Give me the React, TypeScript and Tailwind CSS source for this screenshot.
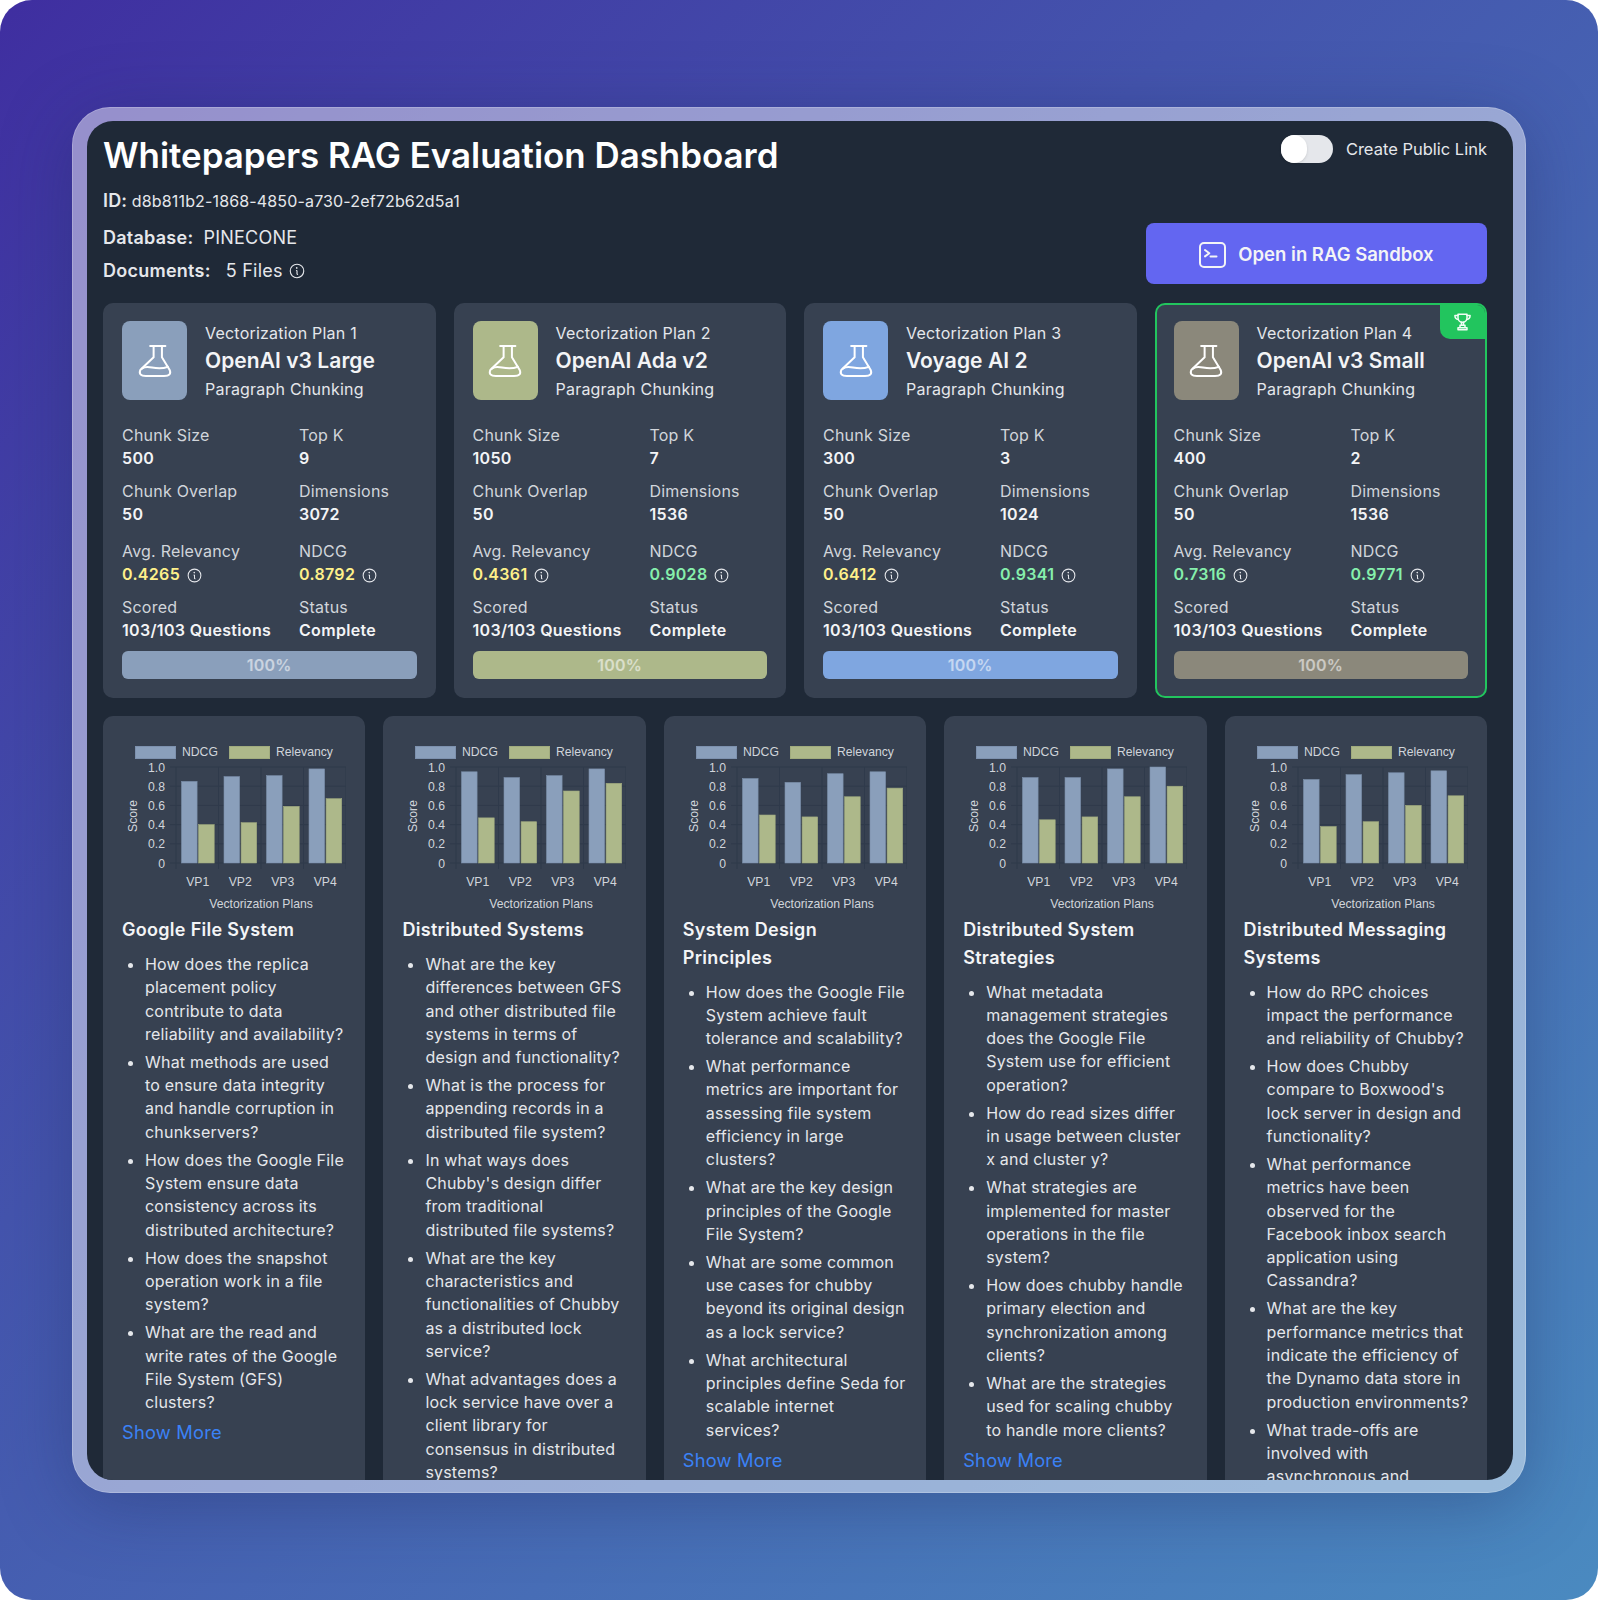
import { PiInfo } from "react-icons/pi";

const plans = [
  {
    label: "Vectorization Plan 1",
    name: "OpenAI v3 Large",
    color: "bg-[#8a9fbb]",
    chunkSize: "500",
    topK: "9",
    dimensions: "3072",
    relevancy: "0.4265",
    relevancyColor: "text-[#fef08a]",
    ndcg: "0.8792",
    ndcgColor: "text-[#fef08a]",
  },
  {
    label: "Vectorization Plan 2",
    name: "OpenAI Ada v2",
    color: "bg-[#adb88a]",
    chunkSize: "1050",
    topK: "7",
    dimensions: "1536",
    relevancy: "0.4361",
    relevancyColor: "text-[#fef08a]",
    ndcg: "0.9028",
    ndcgColor: "text-[#86efac]",
  },
  {
    label: "Vectorization Plan 3",
    name: "Voyage AI 2",
    color: "bg-[#7fa6e0]",
    chunkSize: "300",
    topK: "3",
    dimensions: "1024",
    relevancy: "0.6412",
    relevancyColor: "text-[#fef08a]",
    ndcg: "0.9341",
    ndcgColor: "text-[#86efac]",
  },
  {
    label: "Vectorization Plan 4",
    name: "OpenAI v3 Small",
    color: "bg-[#8b887b]",
    chunkSize: "400",
    topK: "2",
    dimensions: "1536",
    relevancy: "0.7316",
    relevancyColor: "text-[#86efac]",
    ndcg: "0.9771",
    ndcgColor: "text-[#86efac]",
    winner: true,
  },
];

const topics = [
  {
    title: "Google File System",
    ndcg: [0.85, 0.9, 0.91, 0.98],
    relevancy: [0.4, 0.42, 0.59, 0.67],
    showMore: true,
    questions: [
      "How does the replica placement policy contribute to data reliability and availability?",
      "What methods are used to ensure data integrity and handle corruption in chunkservers?",
      "How does the Google File System ensure data consistency across its distributed architecture?",
      "How does the snapshot operation work in a file system?",
      "What are the read and write rates of the Google File System (GFS) clusters?",
    ],
  },
  {
    title: "Distributed Systems",
    ndcg: [0.95, 0.89, 0.91, 0.98],
    relevancy: [0.47, 0.43, 0.75, 0.83],
    showMore: false,
    questions: [
      "What are the key differences between GFS and other distributed file systems in terms of design and functionality?",
      "What is the process for appending records in a distributed file system?",
      "In what ways does Chubby's design differ from traditional distributed file systems?",
      "What are the key characteristics and functionalities of Chubby as a distributed lock service?",
      "What advantages does a lock service have over a client library for consensus in distributed systems?",
    ],
  },
  {
    title: "System Design Principles",
    ndcg: [0.88, 0.84, 0.93, 0.95],
    relevancy: [0.5, 0.48, 0.69, 0.78],
    showMore: true,
    questions: [
      "How does the Google File System achieve fault tolerance and scalability?",
      "What performance metrics are important for assessing file system efficiency in large clusters?",
      "What are the key design principles of the Google File System?",
      "What are some common use cases for chubby beyond its original design as a lock service?",
      "What architectural principles define Seda for scalable internet services?",
    ],
  },
  {
    title: "Distributed System Strategies",
    ndcg: [0.89, 0.89, 0.98, 1.0],
    relevancy: [0.45, 0.48, 0.69, 0.8],
    showMore: true,
    questions: [
      "What metadata management strategies does the Google File System use for efficient operation?",
      "How do read sizes differ in usage between cluster x and cluster y?",
      "What strategies are implemented for master operations in the file system?",
      "How does chubby handle primary election and synchronization among clients?",
      "What are the strategies used for scaling chubby to handle more clients?",
    ],
  },
  {
    title: "Distributed Messaging Systems",
    ndcg: [0.87, 0.92, 0.94, 0.96],
    relevancy: [0.38, 0.43, 0.6, 0.7],
    showMore: false,
    questions: [
      "How do RPC choices impact the performance and reliability of Chubby?",
      "How does Chubby compare to Boxwood's lock server in design and functionality?",
      "What performance metrics have been observed for the Facebook inbox search application using Cassandra?",
      "What are the key performance metrics that indicate the efficiency of the Dynamo data store in production environments?",
      "What trade-offs are involved with asynchronous and synchronous replication?",
    ],
  },
];

function FlaskIcon() {
  return (
    <svg width="36" height="34" viewBox="28 56 104 98" fill="none" stroke="white" strokeWidth="5.8" strokeLinecap="round" strokeLinejoin="round">
      <path d="M66 62H110M76 62V94L38 130Q30 148 54 148H106Q130 148 122 130L100 94V62" />
      <path d="M43 127C60 112 80 136 117 122" />
    </svg>
  );
}

function TerminalIcon() {
  return (
    <svg width="27" height="26" viewBox="0 0 27 26" fill="none" stroke="currentColor" strokeWidth="2" strokeLinecap="round" strokeLinejoin="round">
      <rect x="1" y="1" width="25" height="24" rx="4" />
      <path d="M6 8l4.3 3.2L6 14.4M11.5 14.4h6" />
    </svg>
  );
}

function TrophyIcon() {
  return (
    <svg width="17" height="18" viewBox="0 0 17 18" fill="none" stroke="currentColor" strokeWidth="1.5" strokeLinejoin="round" strokeLinecap="round">
      <path d="M4 1.2h9v3.6a4.5 4.5 0 0 1-9 0z" />
      <path d="M4 2.6H.9c0 2.4 1.1 3.7 3.5 4M13 2.6h3.1c0 2.4-1.1 3.7-3.5 4" />
      <path d="M7.5 9.3v3M9.5 9.3v3M6 12.3h5v2.4H6zM4 16.8h9v-2.1H4z" />
    </svg>
  );
}

function Stat({ label, value }: { label: string; value: string }) {
  return (
    <div>
      <div className="text-[#d1d5db]">{label}</div>
      <div className="font-semibold tracking-[0.32px] text-[#f3f4f6]">{value}</div>
    </div>
  );
}

function ScoreStat({ label, value, color }: { label: string; value: string; color: string }) {
  return (
    <div>
      <div className="text-[#d1d5db]">{label}</div>
      <div className="flex items-center gap-[6px]">
        <span className={`font-semibold tracking-[0.32px] ${color}`}>{value}</span>
        <PiInfo className="text-[#e5e7eb]" size={17} />
      </div>
    </div>
  );
}

function PlanCard({ plan }: { plan: (typeof plans)[number] }) {
  return (
    <div
      className={`relative h-[395px] overflow-hidden rounded-[10px] border-2 bg-[#374151] px-[17px] pt-4 text-[16px] leading-[23.3px] tracking-[0.22px] ${
        plan.winner ? "border-[#22c55e]" : "border-transparent"
      }`}
    >
      {plan.winner && (
        <div className="absolute right-0 top-0 flex h-[34px] w-[45px] items-center justify-center rounded-bl-[10px] bg-[#22c55e] text-[#f0fdf4]">
          <TrophyIcon />
        </div>
      )}
      <div className="flex h-[79px] items-center gap-[18px]">
        <div className={`flex h-[79px] w-[65px] shrink-0 items-center justify-center rounded-lg ${plan.color}`}>
          <FlaskIcon />
        </div>
        <div className="flex flex-col gap-[4.5px] pt-[2px] text-[#e5e7eb]">
          <div>{plan.label}</div>
          <div className="-mt-px mb-px text-[21px] font-semibold leading-[24px] tracking-[0.05px] text-[#f3f4f6]">{plan.name}</div>
          <div>Paragraph Chunking</div>
        </div>
      </div>
      <div className="mt-[24px] grid grid-cols-[177px_1fr] gap-y-[9.5px]">
        <Stat label="Chunk Size" value={plan.chunkSize} />
        <Stat label="Top K" value={plan.topK} />
        <Stat label="Chunk Overlap" value="50" />
        <Stat label="Dimensions" value={plan.dimensions} />
      </div>
      <div className="mt-[13.5px] grid grid-cols-[177px_1fr] gap-y-[9px]">
        <ScoreStat label="Avg. Relevancy" value={plan.relevancy} color={plan.relevancyColor} />
        <ScoreStat label="NDCG" value={plan.ndcg} color={plan.ndcgColor} />
        <Stat label="Scored" value="103/103 Questions" />
        <Stat label="Status" value="Complete" />
      </div>
      <div className={`mt-[9px] flex h-[28px] items-center justify-center rounded-md font-semibold text-white/55 ${plan.color}`}>
        100%
      </div>
    </div>
  );
}

function ScoreChart({ ndcg, relevancy }: { ndcg: number[]; relevancy: number[] }) {
  const left = 54;
  const bottom = 128;
  const plotHeight = 96;
  const slot = 42.5;
  const ticks = [0, 0.2, 0.4, 0.6, 0.8, 1];

  return (
    <svg width="224" height="181" viewBox="0 0 224 181" className="block" fontFamily="'Liberation Sans', Arial, sans-serif" fontSize="12.2" fill="#d1d5db" letterSpacing="0">
      <rect x="13.5" y="11.5" width="40" height="12" fill="#8a9fbb" stroke="#7d91ae" />
      <text x="60" y="21">NDCG</text>
      <rect x="107.5" y="11.5" width="40" height="12" fill="#adb88a" stroke="#a0ab7e" />
      <text x="154" y="21">Relevancy</text>

      {ticks.map((t) => {
        const y = bottom - t * plotHeight;
        return (
          <g key={t}>
            <line x1={left - 6} x2="224" y1={y} y2={y} stroke="#2f3a4b" />
            <text x={left - 11} y={y + 4.5} textAnchor="end">
              {t === 0 ? "0" : t.toFixed(1)}
            </text>
          </g>
        );
      })}
      {[0, 1, 2, 3, 4].map((i) => (
        <line key={i} x1={left + i * slot} x2={left + i * slot} y1="32" y2={bottom + 6} stroke="#2f3a4b" />
      ))}

      {ndcg.map((v, i) => (
        <rect key={i} x={left + i * slot + 5.5} y={bottom - v * plotHeight} width="15.6" height={v * plotHeight} fill="#8a9fbb" stroke="#7a8ea9" strokeWidth="0.6" />
      ))}
      {relevancy.map((v, i) => (
        <rect key={i} x={left + i * slot + 22.6} y={bottom - v * plotHeight} width="15.6" height={v * plotHeight} fill="#adb88a" stroke="#9fa97f" strokeWidth="0.6" />
      ))}

      {["VP1", "VP2", "VP3", "VP4"].map((name, i) => (
        <text key={name} x={left + i * slot + slot / 2 + 0.5} y="150.5" textAnchor="middle">
          {name}
        </text>
      ))}
      <text x="139" y="173" textAnchor="middle">
        Vectorization Plans
      </text>
      <text transform="translate(15 81) rotate(-90)" textAnchor="middle">
        Score
      </text>
    </svg>
  );
}

function TopicCard({ topic }: { topic: (typeof topics)[number] }) {
  return (
    <div className="min-h-[900px] rounded-[10px] bg-[#374151] px-[19px] pt-[19px] text-[16px] leading-[23.3px] tracking-[0.2px] text-[#e5e7eb]">
      <ScoreChart ndcg={topic.ndcg} relevancy={topic.relevancy} />
      <h3 className="text-[18px] font-semibold leading-[27.5px] tracking-[0.3px] text-[#f3f4f6]">{topic.title}</h3>
      <ul className="-mr-[2px] mt-[9.5px] list-disc pl-[23px] marker:text-[#e5e7eb]">
        {topic.questions.map((q) => (
          <li key={q} className="mb-[4.7px]">
            {q}
          </li>
        ))}
      </ul>
      {topic.showMore && <div className="text-[18.3px] leading-[26px] text-[#3b82f6]">Show More</div>}
    </div>
  );
}

export default function App() {
  return (
    <div className="h-[1600px] w-[1598px] overflow-hidden rounded-[32px] bg-linear-to-br from-[#3f2ea0] to-[#4a8ac0] pl-[72px] pt-[107px] font-[Inter,sans-serif] text-white">
      <div className="h-[1386px] w-[1454px] rounded-[38px] border border-white/20 bg-white/45 pb-3 pl-[14px] pr-3 pt-[13px] shadow-[0_12px_70px_rgba(30,40,90,0.35)]">
        <div className="h-full overflow-hidden rounded-[26px] bg-[#1f2937] pl-4 pr-[26px] pt-[14px]">
          <div className="flex h-[168px] justify-between">
            <div>
              <h1 className="text-[34.9px] font-semibold leading-[40px]">Whitepapers RAG Evaluation Dashboard</h1>
              <div className="mt-[14px] text-[16px] leading-[24px] tracking-[0.15px] text-[#e5e7eb]">
                <span className="text-[18px] font-semibold">ID:</span> d8b811b2-1868-4850-a730-2ef72b62d5a1
              </div>
              <div className="mt-[12px] text-[18px] leading-[26px] tracking-[0.25px] text-[#e5e7eb]">
                <span className="font-semibold">Database:</span>
                <span className="ml-[10px]">PINECONE</span>
              </div>
              <div className="mt-[7px] flex items-center text-[18px] leading-[26px] tracking-[0.25px] text-[#e5e7eb]">
                <span className="font-semibold">Documents:</span>
                <span className="ml-[15px]">5 Files</span>
                <PiInfo className="ml-[5px]" size={18} />
              </div>
            </div>
            <div className="flex w-[341px] flex-col items-end">
              <div className="flex items-center gap-[13px] text-[16.5px] leading-[28px] text-[#e5e7eb]">
                <div className="h-[28px] w-[52px] rounded-full bg-[#e5e7eb]">
                  <div className="h-[28px] w-[26px] rounded-full bg-white shadow-sm" />
                </div>
                Create Public Link
              </div>
              <button className="mt-[60px] flex h-[61px] w-full items-center justify-center gap-[12px] rounded-lg bg-[#6366f1] pt-[2px] text-[18.5px] font-semibold text-[#f3f4f6]">
                <TerminalIcon />
                Open in RAG Sandbox
              </button>
            </div>
          </div>
          <div className="grid grid-cols-4 gap-[18px]">
            {plans.map((plan) => (
              <PlanCard key={plan.label} plan={plan} />
            ))}
          </div>
          <div className="mt-[18px] grid grid-cols-5 gap-[18px]">
            {topics.map((topic) => (
              <TopicCard key={topic.title} topic={topic} />
            ))}
          </div>
        </div>
      </div>
    </div>
  );
}
